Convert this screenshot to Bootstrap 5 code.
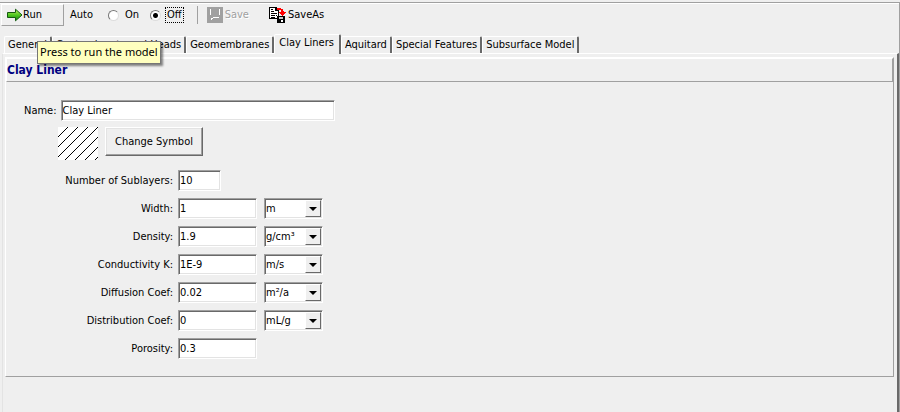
<!DOCTYPE html>
<html lang="en">
<head>
<meta charset="utf-8">
<meta name="viewport" content="width=device-width, initial-scale=1">
<title>Clay Liner</title>
<link href="https://cdn.jsdelivr.net/npm/bootstrap@5.3.0/dist/css/bootstrap.min.css" rel="stylesheet">
<style>
:root { --face: #efefef; --shade: #a0a0a0; --deep: #696969; --soft: #e3e3e3; }
body { background: var(--face); color: #000; font: 11px/14px "DejaVu Sans Condensed", "DejaVu Sans", sans-serif; }
button, input, select { font: inherit; color: inherit; }
.app-shell { padding-top: 2px; }
.app-frame { border-top: 1px solid var(--shade); border-right: 1px solid var(--shade); box-shadow: inset 0 1px #fff; }

/* toolbar */
.toolbar { height: 24px; margin-top: 1px; padding-left: 1px; }
.tool-row { height: 22px; }
.tool-btn { background: transparent; border: 0; padding: 0; display: flex; align-items: center; gap: 2px; }
.run-btn { width: 63px; height: 22px; padding-left: 5px; gap: 0; border: 1px solid; border-color: #fff var(--shade) var(--shade) #fff; }
.tool-btn:disabled { color: var(--shade); text-shadow: 1px 1px #fff; }
.saveas-btn { margin-left: 20px; }
.tool-rule { width: 1px; height: 18px; background: var(--shade); margin: 0 9px 0 13px; }
.auto-text { margin-left: 6px; }
.radio-dot { appearance: none; margin: 0 0 0 15px; width: 11px; height: 11px; border-radius: 50%; border: 1px solid; border-color: #777 #ddd #ddd #777; background: #fff; }
.radio-dot:checked { margin-left: 9px; background: radial-gradient(circle, #000 0 2px, #fff 3px); }
.radio-text { padding: 0 1px; border: 1px dotted transparent; }
.radio-text.focused { border-color: #000; }
.tip { left: 37px; top: 38px; z-index: 2; background: #ffffbf; border: 1px solid #767676; box-shadow: 2px 2px 2px #0007; padding: 1px 2px 2px; font: 11px/18px "Noto Sans", sans-serif; }

/* tabs */
.tab-strip { margin-top: 6px; padding-left: 4px; height: 19px; }
.tab-strip .tab-btn { height: 17px; padding: 0 3px; background: transparent; color: #000; white-space: nowrap; border: solid; border-width: 1px 2px 0 1px; border-color: #fff var(--deep) transparent #fff; border-radius: 2px 2px 0 0; }
.tab-strip .tab-btn.active { height: 20px; padding: 0 5px 3px 4px; background: var(--face); margin-bottom: -1px; position: relative; }

/* pages */
.tab-page { margin-left: 2px; padding: 3px 3px 0 2px; border: solid; border-width: 1px 2px 0 1px; border-color: #fff var(--deep) transparent var(--soft); }
.sheet { border: 1px solid; border-color: #fff var(--shade) var(--shade) #fff; padding-bottom: 17px; }
.sheet-title { margin: 0; height: 24px; border: 1px solid; border-color: #fff var(--shade) var(--shade) #fff; color: #000080; font: bold 12px/22px "DejaVu Sans Condensed", "DejaVu Sans", sans-serif; }

/* fields */
.field { height: 21px; min-width: 0; border: 1px solid; border-color: var(--shade) #fff #fff var(--shade); box-shadow: inset 1px 1px var(--deep), inset -1px -1px var(--soft); background: #fff; padding: 0 2px 1px 1px; border-radius: 0; }
.name-row { padding-left: 18px; margin-top: 18px; gap: 4px; }
.name-field { width: 274px; }
.symbol-row { padding-left: 52px; margin-top: 6px; gap: 7px; }
.symbol-btn { width: 98px; height: 29px; border: 1px solid; border-color: #fff var(--deep) var(--deep) #fff; box-shadow: inset -1px -1px var(--shade), inset 1px 1px var(--soft); background: var(--face); }
.props { display: grid; grid-template-columns: 167px 79px 59px; gap: 7px; margin-top: 10px; align-items: center; }
.props label { text-align: right; grid-column: 1; }
.props .field { width: 79px; margin-left: -2px; }
.props .short { width: 43px; }
.unit-box { display: grid; width: 59px; margin-left: -2px; }
.unit-box > * { grid-area: 1 / 1; }
.props .unit-box .field { appearance: none; margin: 0; width: 59px; padding: 1px 1px 0; }
.unit-arrow { justify-self: end; align-self: center; margin-right: 2px; width: 16px; height: 17px; pointer-events: none; background: var(--face); border: 1px solid; border-color: #fff var(--deep) var(--deep) #fff; }
</style>
</head>
<body>
<div class="app-shell d-flex flex-column min-vh-100">
<div class="app-frame position-relative d-flex flex-column flex-grow-1">
  <div class="toolbar d-flex align-items-start">
    <button type="button" class="tool-btn run-btn" aria-describedby="run-tip">
      <svg width="16" height="14" viewBox="0 0 16 14"><defs><linearGradient id="leaf" x2="0" y2="1"><stop stop-color="#c8f060"/><stop offset=".5" stop-color="#50c820"/><stop offset="1" stop-color="#108010"/></linearGradient></defs><path d="M.5 4.500H8.500V1.200L15 7 8.500 12.800V9.500H.5Z" fill="url(#leaf)" stroke="#145a10"/></svg>
      <span>Run</span>
    </button>
    <div class="tool-row d-flex align-items-center" role="radiogroup" aria-labelledby="auto-label">
      <span id="auto-label" class="auto-text">Auto</span>
      <input class="radio-dot" type="radio" name="auto" id="auto-on"><label class="radio-text ms-1" for="auto-on">On</label>
      <input class="radio-dot" type="radio" name="auto" id="auto-off" checked><label class="radio-text focused ms-1" for="auto-off">Off</label>
    </div>
    <div class="tool-row d-flex align-items-center">
      <span class="tool-rule"></span>
      <button type="button" class="tool-btn" disabled>
        <svg width="16" height="16" viewBox="0 0 16 16" shape-rendering="crispEdges"><path d="M0 0H16V16H0Z" fill="#a0a0a0"/><path d="M3 2h1v6h-1zM12 2h1v6h-1zM6 10h6v1H6zM4 11h2v1H4zM4 12h1v1H4z" fill="#fff"/></svg>
        <span>Save</span>
      </button>
      <button type="button" class="tool-btn saveas-btn">
        <svg width="17" height="16" viewBox="0 0 17 16" shape-rendering="crispEdges"><path d="M0 0H7L10 3V12H0Z"/><path d="M1 1H6V4H9V11H1Z" fill="#fff"/><path d="M2 2h2v1H2zM2 4h3v1H2zM2 6h6v1H2zM2 8h4v1H2zM7 8h1v1H7zM2 10h4v1H2zM7 2h1v1H7z"/><path d="M8 9H16V16H8Z"/><path d="M10 10H14V12H10Z" fill="#c8c8c8"/><path d="M12 13h2v2h-2z" fill="#fff"/><path d="M8 1H12V2H14V4H15V5H17V6H16V7H15V8H14V9H13V8H12V7H11V6H10V5H12V3H8Z" fill="red"/></svg>
        <span>SaveAs</span>
      </button>
    </div>
  </div>
  <div id="run-tip" role="tooltip" class="tip position-absolute">Press to run the model</div>

  <div class="tab-strip d-flex align-items-end" role="tablist">
    <button type="button" role="tab" class="tab-btn">General</button>
    <button type="button" role="tab" class="tab-btn">Contaminants and Heads</button>
    <button type="button" role="tab" class="tab-btn">Geomembranes</button>
    <button type="button" role="tab" class="tab-btn active" aria-selected="true" id="clay-tab">Clay Liners</button>
    <button type="button" role="tab" class="tab-btn">Aquitard</button>
    <button type="button" role="tab" class="tab-btn">Special Features</button>
    <button type="button" role="tab" class="tab-btn">Subsurface Model</button>
  </div>

  <main class="tab-page flex-grow-1" role="tabpanel" aria-labelledby="clay-tab">
    <form class="sheet">
      <h1 class="sheet-title">Clay Liner</h1>
      <div class="name-row d-flex align-items-center">
        <label for="liner-name">Name:</label>
        <input class="field name-field" type="text" id="liner-name" value="Clay Liner">
      </div>
      <div class="symbol-row d-flex align-items-start">
        <svg width="40" height="33" viewBox="0 0 40 33" role="img" aria-label="Hatch symbol"><path d="M0 0H40V33H0Z" fill="#fff"/><path d="M0 10L10 0M0 20L20 0M0 30L30 0M7 33L40 0M17 33L40 10M27 33L40 20M37 33L40 30" stroke="#000" fill="none" shape-rendering="crispEdges"/></svg>
        <button type="button" class="symbol-btn">Change Symbol</button>
      </div>
      <div class="props">
        <label for="sublayers">Number of Sublayers:</label><input class="field short" type="text" id="sublayers" value="10">
        <label for="width">Width:</label><input class="field" type="text" id="width" value="1">
        <div class="unit-box"><select class="field" aria-label="Width unit"><option>m</option></select><svg class="unit-arrow" viewBox="0 0 14 15"><path d="M3 6h8L7 10Z"/></svg></div>
        <label for="density">Density:</label><input class="field" type="text" id="density" value="1.9">
        <div class="unit-box"><select class="field" aria-label="Density unit"><option>g/cm³</option></select><svg class="unit-arrow" viewBox="0 0 14 15"><path d="M3 6h8L7 10Z"/></svg></div>
        <label for="conductivity">Conductivity K:</label><input class="field" type="text" id="conductivity" value="1E-9">
        <div class="unit-box"><select class="field" aria-label="Conductivity unit"><option>m/s</option></select><svg class="unit-arrow" viewBox="0 0 14 15"><path d="M3 6h8L7 10Z"/></svg></div>
        <label for="diffusion">Diffusion Coef:</label><input class="field" type="text" id="diffusion" value="0.02">
        <div class="unit-box"><select class="field" aria-label="Diffusion unit"><option>m²/a</option></select><svg class="unit-arrow" viewBox="0 0 14 15"><path d="M3 6h8L7 10Z"/></svg></div>
        <label for="distribution">Distribution Coef:</label><input class="field" type="text" id="distribution" value="0">
        <div class="unit-box"><select class="field" aria-label="Distribution unit"><option>mL/g</option></select><svg class="unit-arrow" viewBox="0 0 14 15"><path d="M3 6h8L7 10Z"/></svg></div>
        <label for="porosity">Porosity:</label><input class="field" type="text" id="porosity" value="0.3">
      </div>
    </form>
  </main>
</div>
</div>
<script src="https://cdn.jsdelivr.net/npm/bootstrap@5.3.0/dist/js/bootstrap.bundle.min.js"></script>
</body>
</html>
